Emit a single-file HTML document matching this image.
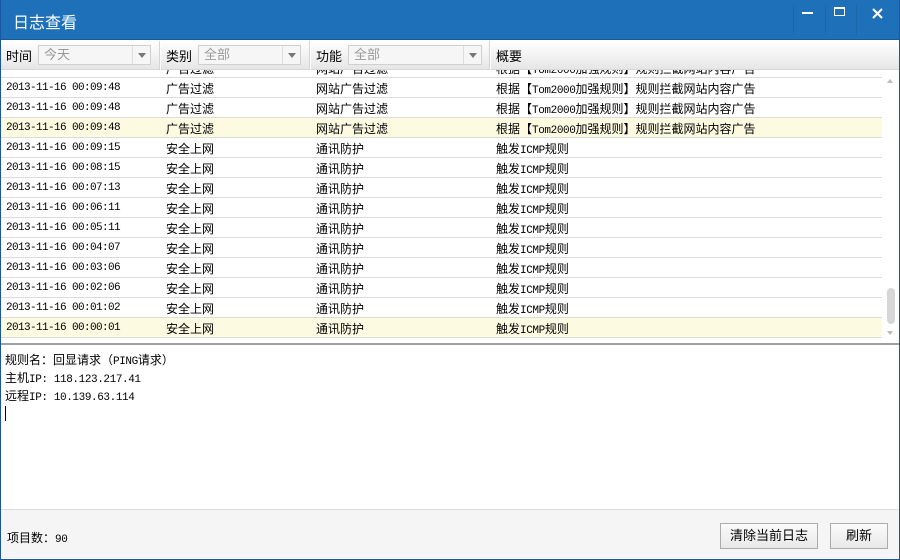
<!DOCTYPE html>
<html><head><meta charset="utf-8"><style>
*{margin:0;padding:0;box-sizing:border-box}
body{width:900px;height:560px;overflow:hidden;font-family:"Liberation Sans","Noto Sans CJK SC",sans-serif;font-size:12px;color:#000;background:#fff;position:relative}
.win{position:absolute;left:0;top:0;width:900px;height:560px;border:1px solid #1b56a0;border-top:none}
.title{position:absolute;left:0;top:0;width:900px;height:40px;background:#1e71b8;border-bottom:1px solid #17599a}
.title span{position:absolute;left:13px;top:9px;color:#fff;font-size:16px}
.hdr{position:absolute;left:1px;top:41px;width:898px;height:29px;background:linear-gradient(#fff,#e6e6e6);border-bottom:1px solid #d8d8d8}
.hdr .sep{position:absolute;top:0;width:2px;height:29px;background:#d4d4d4;border-right:1px solid #fff}
.hdr .lb{position:absolute;top:5px;font-size:13px}
.combo{position:absolute;top:4px;height:20px;border:1px solid #d0d0d0;background:#f6f6f6;color:#999;font-size:13px;padding:0 0 0 5px;line-height:18px}
.combo i{position:absolute;right:0;top:0;width:18px;height:18px;border-left:1px solid #ddd}
.combo i:after{content:"";position:absolute;left:5px;top:7px;border:4px solid transparent;border-top:5px solid #777}
.list{position:absolute;left:1px;top:70px;width:898px;height:270px;overflow:hidden;background:#fff}
.rows{position:absolute;left:0;top:-12px;width:881px}
.r{height:20px;border-bottom:1px solid #dcdcdc;position:relative}
.r.h{background:#fcfbe2}
.r span{position:absolute;top:2px}
.r .c1{left:5px;font-family:"Liberation Mono",monospace;font-size:11px;letter-spacing:-0.6px;top:4px}
.c2{left:165px}.c3{left:315px}.c4{left:495px}
.m{font-family:"Liberation Mono",monospace;font-size:11px;letter-spacing:-0.4px}
.sb{position:absolute;left:886px;top:218px;width:8px;height:36px;border-radius:4px;background:#d6d6d6}
.div{position:absolute;left:1px;top:343px;width:898px;height:2px;background:#a0a0a0}
.det{position:absolute;left:5px;top:352px;line-height:16px;font-size:12px}
.foot{position:absolute;left:1px;top:509px;width:898px;height:49px;background:#f5f5f5;border-top:1px solid #dcdcdc}
.btn{position:absolute;top:13px;height:26px;border:1px solid #acacac;background:linear-gradient(#fbfbfb,#e8e8e8);font-size:13px;text-align:center;line-height:24px}
</style></head><body>
<div class="title"><span>日志查看</span>
<div style="position:absolute;left:802px;top:12px;width:11px;height:2px;background:#fff"></div>
<div style="position:absolute;left:834px;top:7px;width:11px;height:9px;border:1px solid #fff;border-top:2px solid #fff"></div>
<div style="position:absolute;left:825px;top:5px;width:1px;height:30px;background:#1a66a8"></div>
<div style="position:absolute;left:793px;top:5px;width:1px;height:30px;background:#1a66a8"></div>
<div style="position:absolute;left:856px;top:5px;width:1px;height:30px;background:#1a66a8"></div>
<svg style="position:absolute;left:872px;top:8px" width="11" height="11"><path d="M1 1L10 10M10 1L1 10" stroke="#fff" stroke-width="2"/></svg>
</div>
<div class="hdr">
<span class="lb" style="left:5px">时间</span><div class="combo" style="left:37px;width:113px">今天<i></i></div>
<div class="sep" style="left:158px"></div>
<span class="lb" style="left:165px">类别</span><div class="combo" style="left:197px;width:103px">全部<i></i></div>
<div class="sep" style="left:308px"></div>
<span class="lb" style="left:315px">功能</span><div class="combo" style="left:347px;width:134px">全部<i></i></div>
<div class="sep" style="left:488px"></div>
<span class="lb" style="left:495px">概要</span>
</div>
<div class="list"><div class="rows">
<div class="r"><span class="c1">2013-11-16 00:09:48</span><span class="c2">广告过滤</span><span class="c3">网站广告过滤</span><span class="c4">根据【<span class="m" style="position:static">Tom2000</span>加强规则】规则拦截网站内容广告</span></div>
<div class="r"><span class="c1">2013-11-16 00:09:48</span><span class="c2">广告过滤</span><span class="c3">网站广告过滤</span><span class="c4">根据【<span class="m" style="position:static">Tom2000</span>加强规则】规则拦截网站内容广告</span></div>
<div class="r"><span class="c1">2013-11-16 00:09:48</span><span class="c2">广告过滤</span><span class="c3">网站广告过滤</span><span class="c4">根据【<span class="m" style="position:static">Tom2000</span>加强规则】规则拦截网站内容广告</span></div>
<div class="r h"><span class="c1">2013-11-16 00:09:48</span><span class="c2">广告过滤</span><span class="c3">网站广告过滤</span><span class="c4">根据【<span class="m" style="position:static">Tom2000</span>加强规则】规则拦截网站内容广告</span></div>
<div class="r"><span class="c1">2013-11-16 00:09:15</span><span class="c2">安全上网</span><span class="c3">通讯防护</span><span class="c4">触发<span class="m" style="position:static">ICMP</span>规则</span></div>
<div class="r"><span class="c1">2013-11-16 00:08:15</span><span class="c2">安全上网</span><span class="c3">通讯防护</span><span class="c4">触发<span class="m" style="position:static">ICMP</span>规则</span></div>
<div class="r"><span class="c1">2013-11-16 00:07:13</span><span class="c2">安全上网</span><span class="c3">通讯防护</span><span class="c4">触发<span class="m" style="position:static">ICMP</span>规则</span></div>
<div class="r"><span class="c1">2013-11-16 00:06:11</span><span class="c2">安全上网</span><span class="c3">通讯防护</span><span class="c4">触发<span class="m" style="position:static">ICMP</span>规则</span></div>
<div class="r"><span class="c1">2013-11-16 00:05:11</span><span class="c2">安全上网</span><span class="c3">通讯防护</span><span class="c4">触发<span class="m" style="position:static">ICMP</span>规则</span></div>
<div class="r"><span class="c1">2013-11-16 00:04:07</span><span class="c2">安全上网</span><span class="c3">通讯防护</span><span class="c4">触发<span class="m" style="position:static">ICMP</span>规则</span></div>
<div class="r"><span class="c1">2013-11-16 00:03:06</span><span class="c2">安全上网</span><span class="c3">通讯防护</span><span class="c4">触发<span class="m" style="position:static">ICMP</span>规则</span></div>
<div class="r"><span class="c1">2013-11-16 00:02:06</span><span class="c2">安全上网</span><span class="c3">通讯防护</span><span class="c4">触发<span class="m" style="position:static">ICMP</span>规则</span></div>
<div class="r"><span class="c1">2013-11-16 00:01:02</span><span class="c2">安全上网</span><span class="c3">通讯防护</span><span class="c4">触发<span class="m" style="position:static">ICMP</span>规则</span></div>
<div class="r h"><span class="c1">2013-11-16 00:00:01</span><span class="c2">安全上网</span><span class="c3">通讯防护</span><span class="c4">触发<span class="m" style="position:static">ICMP</span>规则</span></div>
</div>
<div style="position:absolute;left:886px;top:6px;border:3px solid transparent;border-bottom:4px solid #bbb"></div>
<div style="position:absolute;left:886px;top:261px;border:3px solid transparent;border-top:4px solid #bbb"></div>
<div class="sb"></div>
</div>
<div class="div"></div>
<div class="det">规则名：回显请求（<span class="m">PING</span>请求）<br>主机<span class="m">IP: 118.123.217.41</span><br>远程<span class="m">IP: 10.139.63.114</span><br><span style="display:inline-block;width:1px;height:15px;background:#000"></span></div>
<div class="foot">
<span style="position:absolute;left:6px;top:19px;font-size:12px">项目数：<span class="m">90</span></span>
<div class="btn" style="left:719px;width:98px">清除当前日志</div>
<div class="btn" style="left:829px;width:58px">刷新</div>
</div>
<div class="win"></div>
</body></html>
